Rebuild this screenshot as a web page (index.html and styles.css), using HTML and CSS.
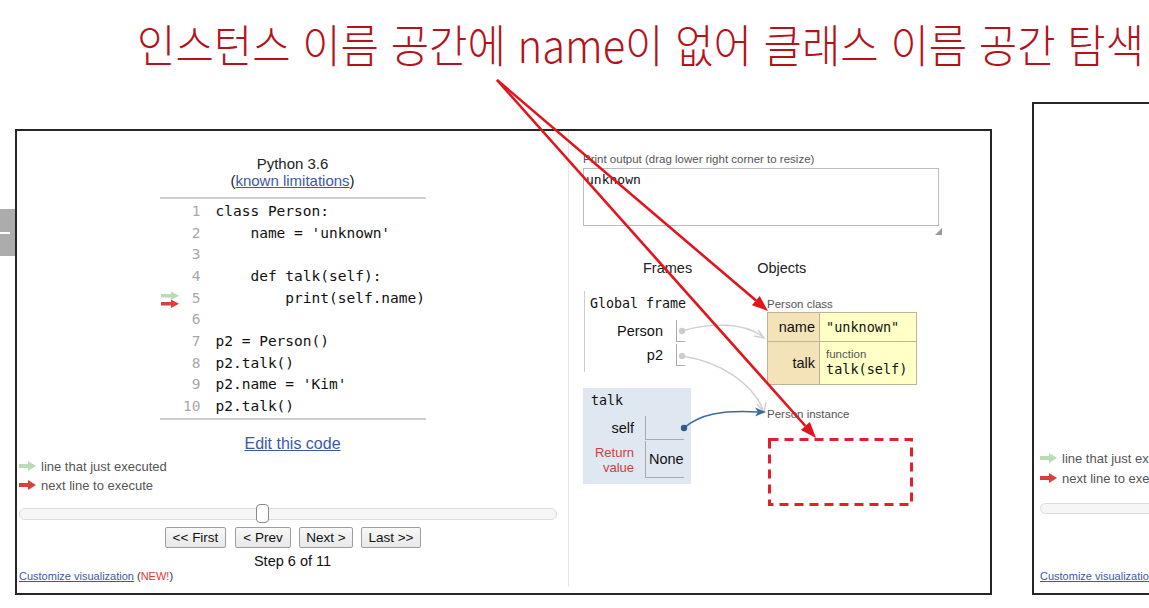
FILE: index.html
```html
<!DOCTYPE html>
<html lang="ko">
<head>
<meta charset="utf-8">
<title>Python Tutor</title>
<link rel="stylesheet" href="styles.css">
</head>
<body>
<div class="page">
  <h1 class="title"><span class="title-text">인스턴스 이름 공간에 name이 없어 클래스 이름 공간 탐색</span></h1>
  <div class="stage">
    <div class="tab"><span class="tab-mark"></span></div>
    <div class="viz">
      <div class="left">
        <div class="lang">Python 3.6<br>(<a href="#">known limitations</a>)</div>
        <div class="code">
          <div class="ln"><span class="gut"></span><span class="num">1</span><span class="src">class Person:</span></div>
          <div class="ln"><span class="gut"></span><span class="num">2</span><span class="src">    name = 'unknown'</span></div>
          <div class="ln"><span class="gut"></span><span class="num">3</span><span class="src"></span></div>
          <div class="ln"><span class="gut"></span><span class="num">4</span><span class="src">    def talk(self):</span></div>
          <div class="ln"><span class="gut"><svg width="21" height="22" viewBox="0 0 21 22"><rect x="1" y="6" width="11" height="3.5" fill="#b6ddb4"/><polygon points="11,3.5 19,7.75 11,12" fill="#b6ddb4"/><rect x="1" y="14" width="11" height="3.5" fill="#d6423a"/><polygon points="11,11.5 19,15.75 11,20" fill="#d6423a"/></svg></span><span class="num">5</span><span class="src">        print(self.name)</span></div>
          <div class="ln"><span class="gut"></span><span class="num">6</span><span class="src"></span></div>
          <div class="ln"><span class="gut"></span><span class="num">7</span><span class="src">p2 = Person()</span></div>
          <div class="ln"><span class="gut"></span><span class="num">8</span><span class="src">p2.talk()</span></div>
          <div class="ln"><span class="gut"></span><span class="num">9</span><span class="src">p2.name = 'Kim'</span></div>
          <div class="ln"><span class="gut"></span><span class="num">10</span><span class="src">p2.talk()</span></div>
        </div>
        <div class="edit"><a href="#">Edit this code</a></div>
        <div class="legend">
          <div class="leg"><svg width="17" height="10" viewBox="0 0 17 10"><rect x="0" y="3" width="10" height="4" fill="#b6ddb4"/><polygon points="9,0 17,5 9,10" fill="#b6ddb4"/></svg><span>line that just executed</span></div>
          <div class="leg"><svg width="17" height="10" viewBox="0 0 17 10"><rect x="0" y="3" width="10" height="4" fill="#d6423a"/><polygon points="9,0 17,5 9,10" fill="#d6423a"/></svg><span>next line to execute</span></div>
        </div>
        <div class="slider"><span class="thumb"></span></div>
        <div class="btns">
          <button class="btn b-first">&lt;&lt; First</button>
          <button class="btn b-prev">&lt; Prev</button>
          <button class="btn b-next">Next &gt;</button>
          <button class="btn b-last">Last &gt;&gt;</button>
        </div>
        <div class="step">Step 6 of 11</div>
        <div class="custom"><a href="#">Customize visualization</a> (<span class="new">NEW!</span>)</div>
      </div>
      <div class="right">
        <div class="po-label">Print output (drag lower right corner to resize)</div>
        <div class="po-box">unknown</div>
        <div class="grip-row"><svg width="7" height="7" viewBox="0 0 7 7"><polygon points="7,0 7,7 0,7" fill="#999"/></svg></div>
        <div class="heads"><span class="h-frames">Frames</span><span class="h-objects">Objects</span></div>
        <div class="diagram">
          <div class="frames">
            <div class="global">
              <div class="fname">Global frame</div>
              <div class="frow"><span class="flabel">Person</span><span class="fcell"></span></div>
              <div class="frow"><span class="flabel">p2</span><span class="fcell"></span></div>
            </div>
            <div class="talkf">
              <div class="fname">talk</div>
              <div class="trow"><span class="tlabel">self</span><span class="tcell"></span></div>
              <div class="trow ret"><span class="tlabel rv">Return<br>value</span><span class="tcell">None</span></div>
            </div>
          </div>
          <div class="objects">
            <div class="olabel">Person class</div>
            <table class="cls">
              <tr class="r1"><td class="key">name</td><td class="val mono">"unknown"</td></tr>
              <tr class="r2"><td class="key">talk</td><td class="val"><div class="fn">function</div><div class="mono">talk(self)</div></td></tr>
            </table>
            <div class="olabel inst">Person instance</div>
            <svg class="dash" width="147" height="70" viewBox="0 0 147 70"><rect x="1.5" y="1.5" width="142" height="65" fill="none" stroke="#e3202a" stroke-width="3" stroke-dasharray="9 6"/></svg>
          </div>
        </div>
      </div>
    </div>
    <div class="viz2">
      <div class="legend2">
        <div class="leg"><svg width="17" height="10" viewBox="0 0 17 10"><rect x="0" y="3" width="10" height="4" fill="#b6ddb4"/><polygon points="9,0 17,5 9,10" fill="#b6ddb4"/></svg><span>line that just executed</span></div>
        <div class="leg"><svg width="17" height="10" viewBox="0 0 17 10"><rect x="0" y="3" width="10" height="4" fill="#d6423a"/><polygon points="9,0 17,5 9,10" fill="#d6423a"/></svg><span>next line to execute</span></div>
      </div>
      <div class="slider2"></div>
      <div class="custom2"><a href="#">Customize visualization</a></div>
    </div>
  </div>
  <svg class="overlay" width="1149" height="608" viewBox="0 0 1149 608">
    <path d="M682,331 C712,322 744,323 762,336" fill="none" stroke="#cfcfcf" stroke-width="1.4"/>
    <polyline points="754,336 764,338 758,330" fill="none" stroke="#cfcfcf" stroke-width="1.4"/>
    <path d="M682,356 C722,362 752,384 763,409" fill="none" stroke="#cfcfcf" stroke-width="1.4"/>
    <polyline points="757,404 764,412 766,402" fill="none" stroke="#cfcfcf" stroke-width="1.4"/>
    <circle cx="682" cy="331" r="3.2" fill="#cdcdcd"/>
    <circle cx="682" cy="356" r="3.2" fill="#cdcdcd"/>
    <path d="M684,428 C700,414 722,410 758,412" fill="none" stroke="#3a6b9c" stroke-width="1.5"/>
    <polygon points="766,412 755,407.5 758,412 755,416.5" fill="#3a6b9c"/>
    <circle cx="684" cy="428" r="3.2" fill="#2d5b8a"/>
    <line x1="497" y1="80" x2="756" y2="300.6" stroke="#e3141c" stroke-width="2.6"/>
    <polygon points="768,311 751.9,305.2 759.7,296" fill="#e3141c"/>
    <line x1="497" y1="80" x2="805.4" y2="426" stroke="#e3141c" stroke-width="2.6"/>
    <polygon points="816,438 800.9,430 809.9,422" fill="#e3141c"/>
  </svg>
</div>
</body>
</html>
```

FILE: styles.css
```css
* { box-sizing: border-box; }
body { margin: 0; background: #fff; }
a { color: #3d58a8; }

.page {
  position: relative;
  width: 1149px;
  height: 608px;
  overflow: hidden;
  font-family: "Liberation Sans", Arial, sans-serif;
  color: #111;
}

.title {
  margin: 0;
  height: 102px;
  padding: 19px 0 0 137px;
  font-family: "Noto Sans CJK KR", sans-serif;
  font-weight: 300;
  font-size: 45px;
  line-height: 50px;
  color: #b5121b;
  white-space: nowrap;
}
.title-text {
  display: inline-block;
  transform: scaleX(0.927);
  transform-origin: left center;
}

.stage { display: flex; align-items: flex-start; }

.tab {
  flex: none;
  width: 15px;
  height: 47px;
  margin-top: 107px;
  background: #acacac;
  display: flex;
  align-items: center;
}
.tab-mark { width: 10px; height: 2px; background: #fff; }

.viz {
  flex: none;
  width: 977px;
  height: 466px;
  margin-top: 27px;
  border: 2px solid #262626;
  display: flex;
  align-items: flex-start;
}

/* left column */
.left {
  flex: none;
  width: 552px;
  height: 456px;
  border-right: 1px solid #e6e6e6;
  display: flex;
  flex-direction: column;
}
.lang {
  margin-top: 23.5px;
  text-align: center;
  font-size: 15px;
  line-height: 17px;
  color: #222;
}
.code {
  margin: 8.5px auto 0;
  width: 266px;
  border-top: 2px solid #cfcfcf;
  border-bottom: 2px solid #cfcfcf;
  padding-top: 2px;
  font-family: "DejaVu Sans Mono", monospace;
  font-size: 14.5px;
  line-height: 21.67px;
}
.ln { display: flex; height: 21.67px; }
.gut { width: 21px; flex: none; display: flex; }
.num { width: 20px; flex: none; text-align: right; color: #a8a8a8; }
.src { padding-left: 15px; white-space: pre; color: #111; }

.edit {
  margin-top: 14px;
  text-align: center;
  font-size: 16px;
  line-height: 19px;
}
.legend { margin-top: 4px; padding-left: 2px; }
.leg {
  display: flex;
  align-items: center;
  gap: 5px;
  height: 19px;
  font-size: 13px;
  color: #555;
  white-space: nowrap;
}
.slider {
  margin: 13.3px 0 0 2px;
  width: 538px;
  height: 12px;
  border: 1px solid #dcdcdc;
  border-radius: 6px;
  background: #f6f6f6;
  display: flex;
  align-items: center;
}
.thumb {
  margin-left: 236px;
  width: 13px;
  height: 19px;
  flex: none;
  background: #fff;
  border: 1px solid #8a8a8a;
  border-radius: 4px;
}
.btns {
  margin-top: 7.5px;
  display: flex;
  justify-content: center;
  gap: 8px;
  padding-left: 1px;
}
.btn {
  height: 21px;
  padding: 0;
  font-family: "Liberation Sans", Arial, sans-serif;
  font-size: 13.5px;
  color: #111;
  background: linear-gradient(#f8f8f8, #e8e8e8);
  border: 1px solid #9d9d9d;
  border-radius: 2px;
}
.b-first { width: 61px; margin-right: 1px; }
.b-prev { width: 56px; }
.b-next { width: 54px; }
.b-last { width: 60px; }
.step {
  margin-top: 5px;
  text-align: center;
  font-size: 14.5px;
  line-height: 17px;
  color: #111;
}
.custom {
  padding-left: 2px;
  font-size: 11px;
  line-height: 13px;
  color: #333;
}
.new { color: #e33; }

/* right column */
.right { flex: 1; padding-left: 14px; }
.po-label {
  margin-top: 21.5px;
  font-size: 11.5px;
  line-height: 13px;
  color: #555;
  white-space: nowrap;
}
.po-box {
  margin-top: 2.5px;
  width: 356px;
  height: 58px;
  border: 1px solid #bdbdbd;
  padding: 3px 2px;
  font-family: "DejaVu Sans Mono", monospace;
  font-size: 13px;
  line-height: 16px;
  color: #111;
}
.grip-row {
  width: 359px;
  height: 7px;
  margin-top: 2px;
  display: flex;
  justify-content: flex-end;
}
.heads {
  margin-top: 24.5px;
  font-size: 14.5px;
  line-height: 17px;
  color: #222;
  display: flex;
}
.h-frames { margin-left: 60px; }
.h-objects { margin-left: 65px; }

.diagram { margin-top: 14.5px; display: flex; align-items: flex-start; }
.frames { width: 184px; flex: none; }
.global {
  margin-left: 1px;
  border-left: 1px solid #cdcdcd;
  padding: 5px 0 6px 5px;
}
.fname {
  font-family: "DejaVu Sans Mono", monospace;
  font-size: 13.3px;
  line-height: 16px;
  color: #111;
}
.frow { display: flex; height: 22px; margin-top: 2px; }
.global .fname + .frow { margin-top: 8px; }
.flabel {
  width: 73px;
  margin-right: 13px;
  text-align: right;
  font-size: 14.5px;
  line-height: 22px;
}
.fcell {
  width: 9px;
  border-left: 1px solid #aaa;
  border-bottom: 1px solid #aaa;
}
.talkf {
  margin-top: 16px;
  width: 108px;
  background: #dfe7f1;
  padding: 5px 7px 6px 8px;
}
.trow { display: flex; height: 24px; margin-top: 7px; }
.trow.ret { height: 37px; margin-top: 1px; }
.tlabel {
  width: 43px;
  margin-right: 11px;
  text-align: right;
  font-size: 14.5px;
  line-height: 24px;
}
.tlabel.rv {
  color: #d04040;
  font-size: 13px;
  line-height: 15px;
  padding-top: 3.5px;
}
.tcell {
  width: 39px;
  border-left: 1px solid #aaa;
  border-bottom: 1px solid #aaa;
  font-size: 14.5px;
  line-height: 37px;
  padding-left: 3px;
}

.objects { padding-top: 6.5px; }
.olabel {
  font-size: 11.5px;
  line-height: 13px;
  color: #555;
  white-space: nowrap;
}
.cls {
  margin-top: 1.5px;
  width: 150px;
  border-collapse: collapse;
  border: 1px solid #bdb494;
}
.cls td { border: 1px solid #bdb494; padding: 0; }
.cls .key {
  width: 52px;
  background: #f4e2b9;
  text-align: right;
  padding-right: 4px;
  font-size: 14.5px;
}
.cls .val { background: #ffffc6; padding-left: 6px; }
.cls .r1 { height: 29px; }
.cls .r2 { height: 43px; }
.mono {
  font-family: "DejaVu Sans Mono", monospace;
  font-size: 13.5px;
  color: #111;
}
.fn { font-size: 11.5px; line-height: 12px; color: #555; }
.r2 .mono { line-height: 18px; }
.olabel.inst { margin-top: 22.5px; }
.dash { display: block; margin: 17px 0 0 1px; }

/* second panel */
.viz2 {
  flex: none;
  width: 300px;
  height: 493px;
  margin-left: 40px;
  border: 2px solid #262626;
  padding: 344px 0 0 6px;
}
.slider2 {
  margin-top: 15px;
  width: 280px;
  height: 11px;
  border: 1px solid #dcdcdc;
  border-radius: 6px;
  background: #f6f6f6;
}
.custom2 {
  margin-top: 55.5px;
  font-size: 11px;
  line-height: 13px;
  white-space: nowrap;
}
.legend2 .leg { height: 20px; }

.overlay {
  position: absolute;
  left: 0;
  top: 0;
  pointer-events: none;
}
```
